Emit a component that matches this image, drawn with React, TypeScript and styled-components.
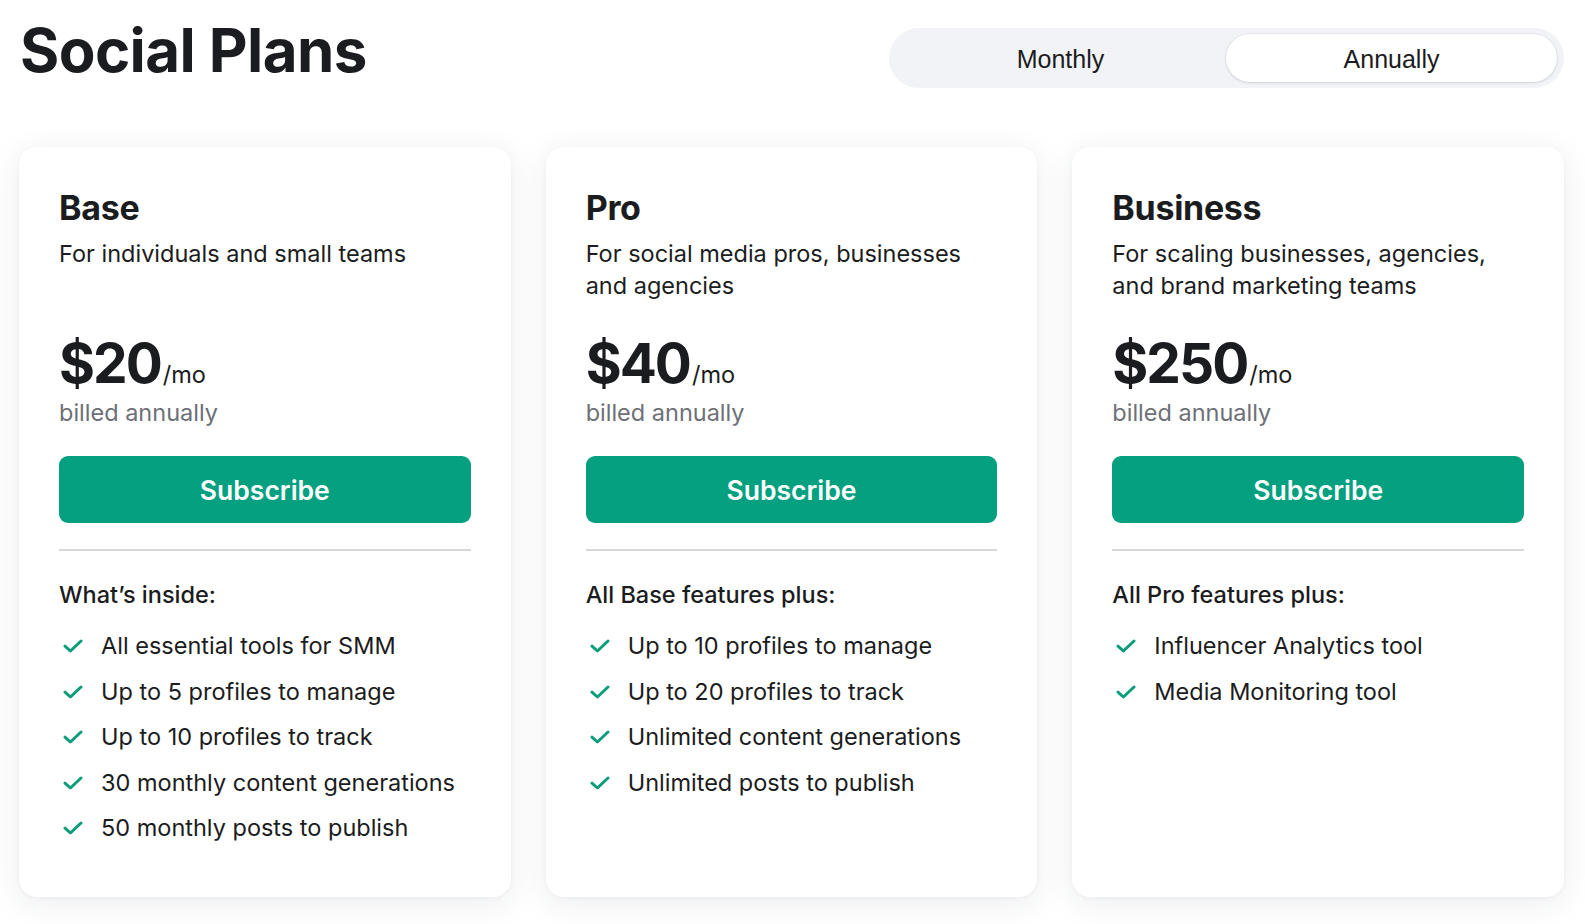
import React from "react";
import styled, { createGlobalStyle } from "styled-components";

const GlobalStyle = createGlobalStyle`
  * { box-sizing: border-box; }
  html, body { margin: 0; padding: 0; background: #ffffff; }
  body {
    font-family: Inter, "Noto Sans", "Liberation Sans", sans-serif;
    color: #1b1c20;
    -webkit-font-smoothing: antialiased;
  }
`;

const Page = styled.div`
  width: 1585px;
  height: 924px;
  overflow: hidden;
  padding: 0 21px 0 19px;
  background: #ffffff;
`;

const Header = styled.header`
  display: flex;
  align-items: center;
  justify-content: space-between;
  height: 116px;
`;

const Title = styled.h1`
  margin: 0 0 0 1px;
  font-size: 60px;
  line-height: 1;
  font-weight: 700;
  letter-spacing: -0.6px;
  color: #1b1c20;
  transform: translateY(-8px);
`;

const Toggle = styled.div`
  display: grid;
  grid-template-columns: 1fr 1fr;
  width: 675px;
  height: 60px;
  padding: 6px 7px 6px 6px;
  border-radius: 30px;
  background: #f1f3f6;
`;

const ToggleOption = styled.div<{ $active?: boolean }>`
  display: flex;
  align-items: center;
  justify-content: center;
  border-radius: 24px;
  font-family: "Liberation Sans", Arial, sans-serif;
  font-size: 25px;
  padding-top: 2px;
  color: #1b1c20;
  background: ${(p) => (p.$active ? "#ffffff" : "transparent")};
  box-shadow: ${(p) =>
    p.$active ? "0 1px 3px rgba(20, 30, 50, 0.12), 0 0 0 1px rgba(20,30,50,0.04)" : "none"};
`;

const Cards = styled.div`
  display: grid;
  grid-template-columns: repeat(3, 1fr);
  gap: 35px;
  margin-top: 31px;
`;

const Card = styled.section`
  height: 750px;
  background: #ffffff;
  border-radius: 18px;
  padding: 41px 40px 0 40px;
  box-shadow: 0 6px 32px rgba(30, 45, 80, 0.09), 0 1px 4px rgba(30, 45, 80, 0.04);
  display: flex;
  flex-direction: column;
`;

const PlanName = styled.h2`
  margin: 0;
  font-size: 34px;
  line-height: 40px;
  font-weight: 700;
  letter-spacing: -0.3px;
`;

const Description = styled.p`
  margin: 10px 0 0 0;
  font-size: 23.5px;
  line-height: 32px;
  height: 64px;
  color: #1b1c20;
`;

const PriceRow = styled.div`
  display: flex;
  align-items: baseline;
  margin-top: 31px;
`;

const Amount = styled.span`
  font-size: 55px;
  line-height: 60px;
  font-weight: 700;
  letter-spacing: -2px;
`;

const Per = styled.span`
  font-size: 23.5px;
  margin-left: 2px;
`;

const Billed = styled.div`
  font-size: 23.5px;
  line-height: 30px;
  color: #6d7077;
  margin-top: 5px;
`;

const SubscribeButton = styled.button`
  margin-top: 28px;
  height: 67px;
  width: 100%;
  border: 0;
  border-radius: 9px;
  background: #04a07f;
  color: #ffffff;
  font-family: Inter, "Noto Sans", sans-serif;
  font-size: 26.5px;
  font-weight: 600;
  cursor: pointer;
`;

const Divider = styled.hr`
  margin: 26px 0 0 0;
  border: 0;
  height: 2px;
  background: #d6d8dc;
`;

const FeaturesTitle = styled.div`
  margin-top: 29px;
  font-size: 23.5px;
  line-height: 30px;
  font-weight: 500;
`;

const FeatureList = styled.ul`
  list-style: none;
  margin: 21px 0 0 0;
  padding: 0;
  display: flex;
  flex-direction: column;
  gap: 15.5px;
`;

const Feature = styled.li`
  display: flex;
  align-items: center;
  font-size: 23.5px;
  line-height: 30px;
  color: #1b1c20;
`;

const CheckWrap = styled.span`
  display: inline-flex;
  width: 42px;
  padding-left: 4px;
  color: #0a9d7b;
`;

const Check = () => (
  <svg width="20" height="14" viewBox="0 0 20 14" fill="none">
    <path
      d="M2 7.2 L7.4 12 L18 2"
      stroke="currentColor"
      strokeWidth="3"
      strokeLinecap="round"
      strokeLinejoin="round"
    />
  </svg>
);

type Plan = {
  name: string;
  desc: string;
  price: string;
  heading: string;
  features: string[];
};

const plans: Plan[] = [
  {
    name: "Base",
    desc: "For individuals and small teams",
    price: "$20",
    heading: "What\u2019s inside:",
    features: [
      "All essential tools for SMM",
      "Up to 5 profiles to manage",
      "Up to 10 profiles to track",
      "30 monthly content generations",
      "50 monthly posts to publish",
    ],
  },
  {
    name: "Pro",
    desc: "For social media pros, businesses and agencies",
    price: "$40",
    heading: "All Base features plus:",
    features: [
      "Up to 10 profiles to manage",
      "Up to 20 profiles to track",
      "Unlimited content generations",
      "Unlimited posts to publish",
    ],
  },
  {
    name: "Business",
    desc: "For scaling businesses, agencies, and brand marketing teams",
    price: "$250",
    heading: "All Pro features plus:",
    features: ["Influencer Analytics tool", "Media Monitoring tool"],
  },
];

export default function App() {
  return (
    <>
      <GlobalStyle />
      <Page>
        <Header>
          <Title>Social Plans</Title>
          <Toggle>
            <ToggleOption>Monthly</ToggleOption>
            <ToggleOption $active>Annually</ToggleOption>
          </Toggle>
        </Header>
        <Cards>
          {plans.map((p) => (
            <Card key={p.name}>
              <PlanName>{p.name}</PlanName>
              <Description>{p.desc}</Description>
              <PriceRow>
                <Amount>{p.price}</Amount>
                <Per>/mo</Per>
              </PriceRow>
              <Billed>billed annually</Billed>
              <SubscribeButton>Subscribe</SubscribeButton>
              <Divider />
              <FeaturesTitle>{p.heading}</FeaturesTitle>
              <FeatureList>
                {p.features.map((f) => (
                  <Feature key={f}>
                    <CheckWrap>
                      <Check />
                    </CheckWrap>
                    {f}
                  </Feature>
                ))}
              </FeatureList>
            </Card>
          ))}
        </Cards>
      </Page>
    </>
  );
}
